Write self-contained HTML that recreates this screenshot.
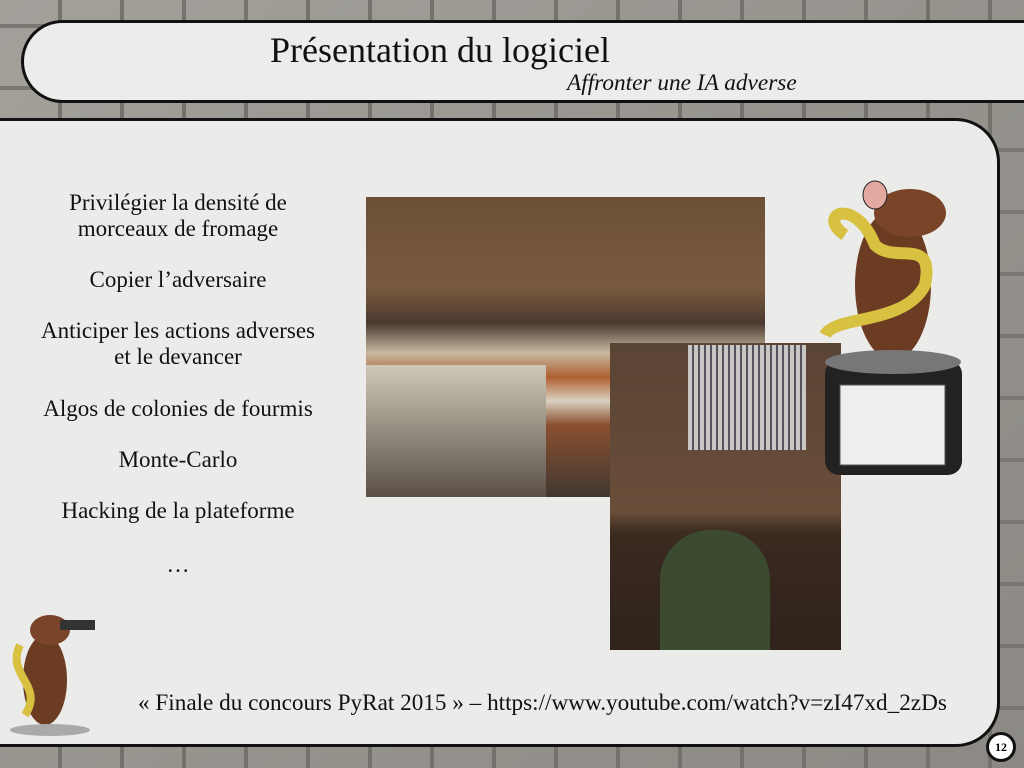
<!DOCTYPE html>
<html><head><meta charset="utf-8"><style>
*{margin:0;padding:0;box-sizing:border-box}
body{width:1024px;height:768px;overflow:hidden;position:relative;background:#8e8b86;font-family:"Liberation Serif",serif;}
.stone{position:absolute;inset:0;background:
repeating-linear-gradient(90deg,transparent 0 58px,#75726d 58px 62px),
repeating-linear-gradient(0deg,transparent 0 58px,#7a7772 58px 62px),
linear-gradient(135deg,#a3a09a,#8c8984);}
.title{position:absolute;left:21px;top:20px;width:1030px;height:83px;border:3px solid #111;border-right:none;border-radius:42px 0 0 42px;background:#ececea;}
.panel{position:absolute;left:-10px;top:118px;width:1010px;height:629px;border:3px solid #111;border-left:none;border-radius:0 44px 44px 0;background:#ebebe9;}
h1{position:absolute;left:0;width:880px;top:29px;text-align:center;font-weight:normal;font-size:36px;color:#111}
.sub{position:absolute;left:567px;top:70px;font-style:italic;font-size:23.3px;color:#111}
.list{position:absolute;left:18px;width:320px;text-align:center;font-size:23px;line-height:26px;color:#111}
.cap{position:absolute;left:138px;top:690px;font-size:23.2px;color:#111;white-space:nowrap}
.p1{position:absolute;left:366px;top:197px;width:399px;height:300px;background:
linear-gradient(180deg,#6b5037 0%,#7a5a3e 30%,#4a3a30 42%,#c8b8a0 52%,#b06030 60%,#d8d0c0 68%,#8a5030 76%,#403830 100%);}
.p1b{position:absolute;left:366px;top:365px;width:180px;height:132px;background:linear-gradient(180deg,#cfc8b8,#5a5048)}
.p2{position:absolute;left:610px;top:343px;width:231px;height:307px;background:linear-gradient(180deg,#5a4434 0%,#6a4e3a 55%,#3a2a20 62%,#2f231c 100%);}
.maze{position:absolute;left:688px;top:345px;width:118px;height:105px;background:repeating-linear-gradient(90deg,#ddd 0 4px,#556 4px 6px),#ccc;opacity:.85}
.pers{position:absolute;left:660px;top:530px;width:110px;height:120px;background:#3c4a30;border-radius:50px 50px 0 0}
.num{position:absolute;left:986px;top:732px;width:30px;height:30px;border:3px solid #111;border-radius:50%;background:#fff;font-size:12px;font-weight:bold;text-align:center;line-height:24px}
</style></head><body>
<div class="stone"></div>
<div class="panel"></div>
<div class="title"></div>
<h1>Présentation du logiciel</h1>
<div class="sub">Affronter une IA adverse</div>
<div class="list" style="top:190px">Privilégier la densité de<br>morceaux de fromage</div>
<div class="list" style="top:267px">Copier l’adversaire</div>
<div class="list" style="top:318px">Anticiper les actions adverses<br>et le devancer</div>
<div class="list" style="top:396px">Algos de colonies de fourmis</div>
<div class="list" style="top:447px">Monte-Carlo</div>
<div class="list" style="top:498px">Hacking de la plateforme</div>
<div class="list" style="top:552px">…</div>
<div class="p1"></div><div class="p1b"></div>
<div class="p2"></div><div class="maze"></div><div class="pers"></div>
<svg style="position:absolute;left:815px;top:175px" width="155" height="310">
<ellipse cx="78" cy="110" rx="38" ry="75" fill="#6b3b22"/>
<ellipse cx="95" cy="38" rx="36" ry="24" fill="#7a4428"/>
<ellipse cx="60" cy="20" rx="12" ry="14" fill="#e3a8a0" stroke="#222"/>
<path d="M30 60 C0 40 40 20 60 70 C80 90 120 60 110 110 C90 150 20 140 10 160" stroke="#d8c040" stroke-width="12" fill="none"/>
<rect x="10" y="185" width="137" height="115" rx="14" fill="#222"/>
<ellipse cx="78" cy="187" rx="68" ry="12" fill="#777"/>
<rect x="25" y="210" width="105" height="80" fill="#eee" stroke="#555"/>
</svg>
<svg style="position:absolute;left:5px;top:605px" width="95" height="132">
<ellipse cx="40" cy="75" rx="22" ry="45" fill="#6b3b22"/>
<ellipse cx="45" cy="25" rx="20" ry="15" fill="#7a4428"/>
<path d="M15 40 C0 70 40 80 20 110" stroke="#d8c040" stroke-width="8" fill="none"/>
<rect x="55" y="15" width="35" height="10" fill="#333"/>
<ellipse cx="45" cy="125" rx="40" ry="6" fill="#aaa"/>
</svg>
<div class="cap">« Finale du concours PyRat 2015 » – https://www.youtube.com/watch?v=zI47xd_2zDs</div>
<div class="num">12</div>
</body></html>
